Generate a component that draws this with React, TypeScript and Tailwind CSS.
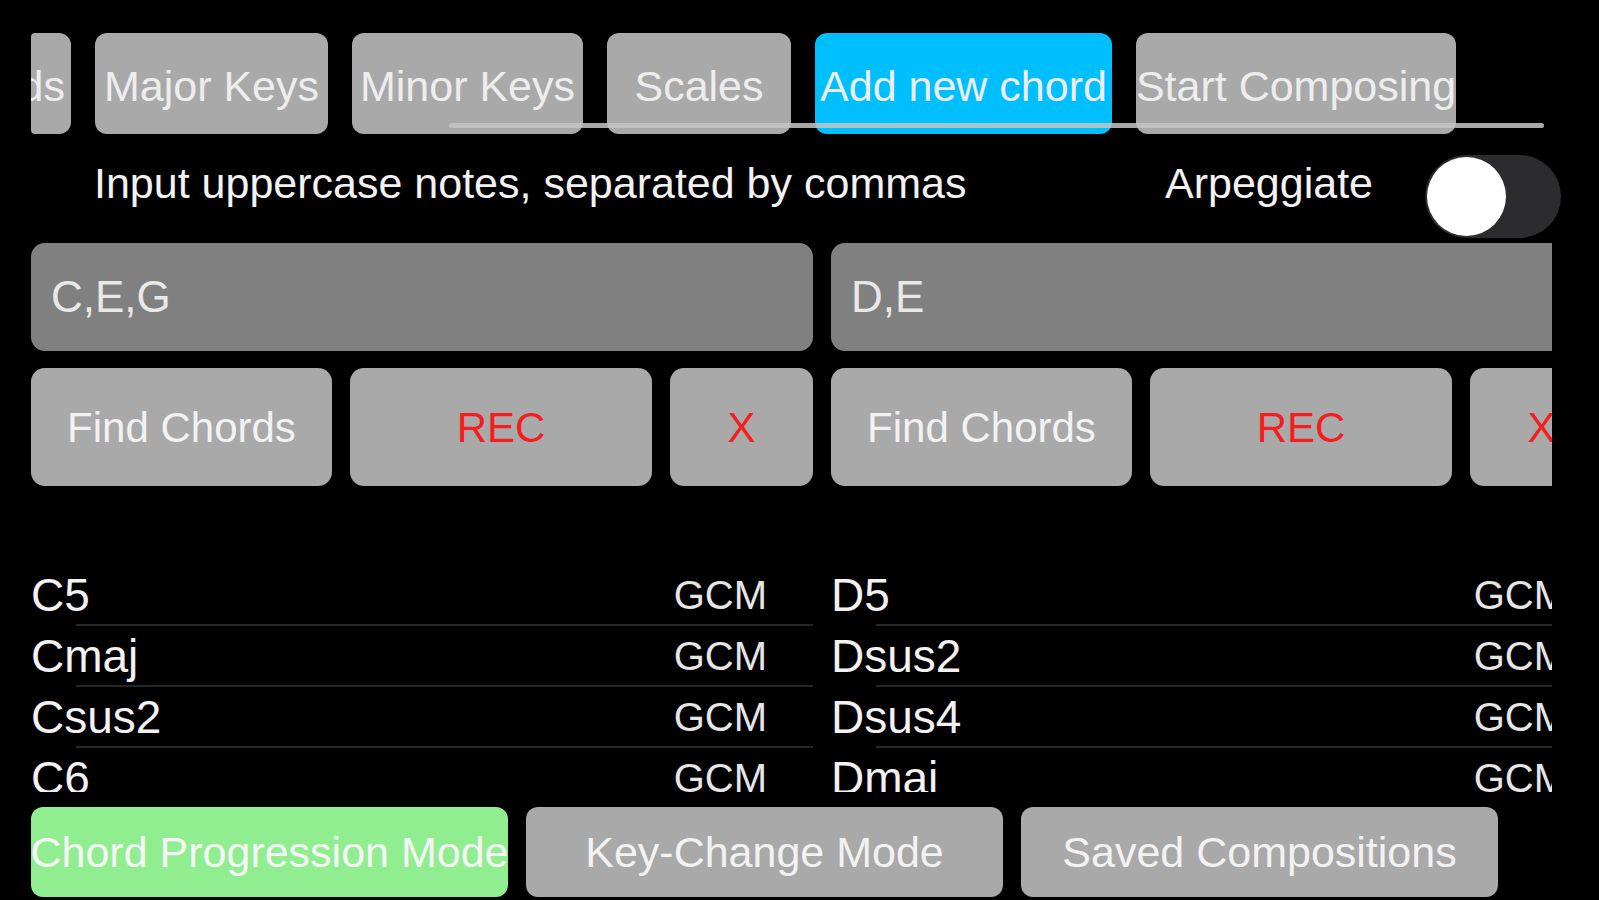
import React from "react";

// chord finder screen (landscape), dark theme
const font = { fontFamily: '"Liberation Sans", Arial, sans-serif' };

const topTabs = [
  { label: "Major Keys", w: "w-[233px]", active: false },
  { label: "Minor Keys", w: "w-[231px]", active: false },
  { label: "Scales", w: "w-[184px]", active: false },
  { label: "Add new chord", w: "w-[297px]", active: true },
  { label: "Start Composing", w: "w-[320px]", active: false },
];

const columns = [
  {
    notes: "C,E,G",
    chords: ["C5", "Cmaj", "Csus2", "C6"],
  },
  {
    notes: "D,E",
    chords: ["D5", "Dsus2", "Dsus4", "Dmaj"],
  },
];

const ChordColumn: React.FC<{ notes: string; chords: string[] }> = ({ notes, chords }) => (
  <div className="w-[782px] shrink-0 flex flex-col">
    {/* input field */}
    <div className="h-[108px] rounded-[14px] bg-[#808080] pl-[20px] flex items-center text-[44px] text-[#e8e8e8]">
      {notes}
    </div>

    {/* actions */}
    <div className="mt-[17px] h-[118px] flex gap-[18px]">
      <div className="w-[301px] rounded-[14px] bg-[#a9a9a9] flex items-center justify-center text-[42px] text-[#f2f2f2] whitespace-nowrap">
        Find Chords
      </div>
      <div className="w-[302px] rounded-[14px] bg-[#a9a9a9] flex items-center justify-center text-[42px] text-[#f51d1d]">
        REC
      </div>
      <div className="w-[143px] rounded-[14px] bg-[#a9a9a9] flex items-center justify-center text-[42px] text-[#f51d1d]">
        X
      </div>
    </div>

    {/* results */}
    <div className="mt-[79px] h-[227px] overflow-hidden">
      {chords.map((c) => (
        <div key={c} className="h-[61px] flex flex-col">
          <div className="flex-1 flex items-center justify-between pr-[46px]">
            <span className="text-[46px] text-[#f2f2f2] leading-none">{c}</span>
            <span className="text-[40px] text-[#e6e6e6] leading-none">GCM</span>
          </div>
          <div className="h-[2px] ml-[45px] bg-[#262626]" />
        </div>
      ))}
    </div>
  </div>
);

export default function App() {
  return (
    <div className="w-[1599px] h-[900px] bg-black overflow-hidden pl-[31px]" style={font}>
      {/* top tab strip */}
      <div className="relative mt-[33px] w-[1521px] h-[101px] overflow-hidden">
        <div className="flex gap-[24px] h-full">
          <div className="w-[40px] shrink-0 h-full pt-[6px] rounded-r-[12px] rounded-l-[4px] bg-[#a9a9a9] overflow-hidden flex items-center justify-end pr-[6px] text-[43px] text-[#ededed] whitespace-nowrap">
            Chords
          </div>
          {topTabs.map((t) => (
            <div
              key={t.label}
              className={`${t.w} shrink-0 h-full pt-[6px] rounded-[12px] flex items-center justify-center text-[43px] text-[#ededed] whitespace-nowrap ${
                t.active ? "bg-[#00bfff]" : "bg-[#a9a9a9]"
              }`}
            >
              {t.label}
            </div>
          ))}
        </div>
        {/* scroll indicator */}
        <div className="absolute left-[418px] top-[90px] w-[1095px] h-[5px] rounded-full bg-[#c4c4c4]/85" />
      </div>

      {/* hint + arpeggiate */}
      <div className="w-[1530px] h-[109px] flex items-start justify-between pl-[63px]">
        <div className="mt-[23px] text-[43px] leading-[52px] text-[#f2f2f2] whitespace-nowrap">
          Input uppercase notes, separated by commas
        </div>
        <div className="flex items-start">
          <div className="mt-[23px] text-[43px] leading-[52px] text-[#f2f2f2]">Arpeggiate</div>
          <div className="ml-[52px] mt-[21px] w-[136px] h-[83px] rounded-full bg-[#2c2c2e] p-[2px] flex items-center">
            <div className="w-[79px] h-[79px] rounded-full bg-white" />
          </div>
        </div>
      </div>

      {/* chord columns */}
      <div className="w-[1521px] overflow-hidden">
        <div className="flex gap-[18px]">
          {columns.map((c) => (
            <ChordColumn key={c.notes} notes={c.notes} chords={c.chords} />
          ))}
        </div>
      </div>

      {/* mode buttons */}
      <div className="mt-[15px] h-[90px] flex gap-[18px]">
        <div className="w-[477px] rounded-[12px] bg-[#90ee90] flex items-center justify-center text-[43px] text-[#f5f5f5] whitespace-nowrap">
          Chord Progression Mode
        </div>
        <div className="w-[477px] rounded-[12px] bg-[#a9a9a9] flex items-center justify-center text-[43px] text-[#f2f2f2] whitespace-nowrap">
          Key-Change Mode
        </div>
        <div className="w-[477px] rounded-[12px] bg-[#a9a9a9] flex items-center justify-center text-[43px] text-[#f2f2f2] whitespace-nowrap">
          Saved Compositions
        </div>
      </div>
    </div>
  );
}
